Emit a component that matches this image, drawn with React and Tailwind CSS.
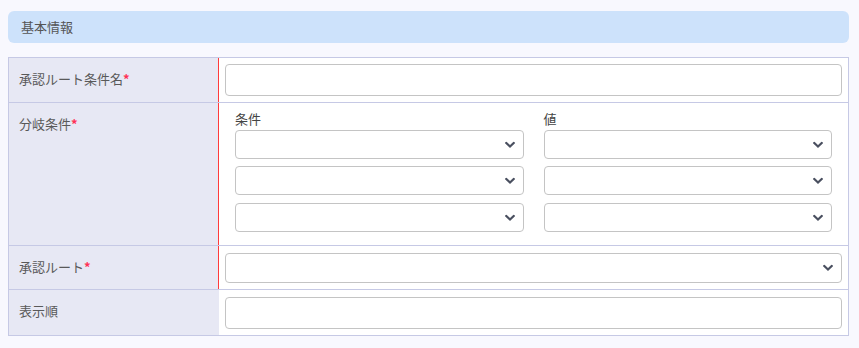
import React from "react";

const font = { fontFamily: '"Noto Sans CJK JP", "Noto Sans", sans-serif' };

function Chevron() {
  return (
    <svg width="10" height="7" viewBox="0 0 10 7" className="absolute right-[8px] top-1/2 -translate-y-1/2">
      <polyline points="1.3,1.5 5,5 8.7,1.5" fill="none" stroke="#4a5060" strokeWidth="2.2" strokeLinecap="square" />
    </svg>
  );
}

function Select({ h = "h-[29px]", extra = "" }) {
  return (
    <div className={`relative ${h} ${extra} w-full rounded-[4px] border border-[#c4c4c4] bg-white`}>
      <Chevron />
    </div>
  );
}

function Input() {
  return <div className="h-[32px] w-full rounded-[4px] border border-[#c4c4c4] bg-white" />;
}

function Label({ text, required, red = true }) {
  return (
    <div className={`w-[210px] shrink-0 bg-[#e7e8f4] pl-[10px] pt-[12px] text-[13px] leading-[18px] text-[#595959] border-r ${red ? "border-[#ff3b3b]" : "border-[#e7e8f4]"}`}>
      {text}
      {required && <span className="text-[#ff3355] font-bold">*</span>}
    </div>
  );
}

function Column({ title }) {
  return (
    <div className="flex flex-col">
      <div className="mb-[2px] text-[13px] leading-[18px] text-[#444]">{title}</div>
      <Select />
      <Select extra="mt-[7px]" />
      <Select extra="mt-[8px]" />
    </div>
  );
}

export default function App() {
  return (
    <div className="min-h-[348px] w-[859px] bg-[#f8f8fe] pl-[8px] pt-[11px]" style={font}>
      <div className="flex h-[32px] w-[841px] items-center rounded-[6px] bg-[#cde2fb] pl-[13px] text-[13px] text-[#555]">
        基本情報
      </div>
      <div className="mt-[14px] w-[841px] border border-[#c6c9e5] bg-white">
        <div className="flex border-b border-[#c6c9e5]">
          <Label text="承認ルート条件名" required />
          <div className="flex-1 px-[6px] pt-[6px] pb-[6px]">
            <Input />
          </div>
        </div>
        <div className="flex border-b border-[#c6c9e5]">
          <Label text="分岐条件" required />
          <div className="flex-1 pl-[16px] pr-[16px] pt-[7px] pb-[13px]">
            <div className="grid grid-cols-2 gap-x-[20px]">
              <Column title="条件" />
              <Column title="値" />
            </div>
          </div>
        </div>
        <div className="flex border-b border-[#c6c9e5]">
          <Label text="承認ルート" required />
          <div className="flex-1 px-[6px] pt-[7px] pb-[6px]">
            <Select h="h-[30px]" />
          </div>
        </div>
        <div className="flex">
          <Label text="表示順" red={false} />
          <div className="flex-1 px-[6px] pt-[7px] pb-[6px]">
            <Input />
          </div>
        </div>
      </div>
    </div>
  );
}
